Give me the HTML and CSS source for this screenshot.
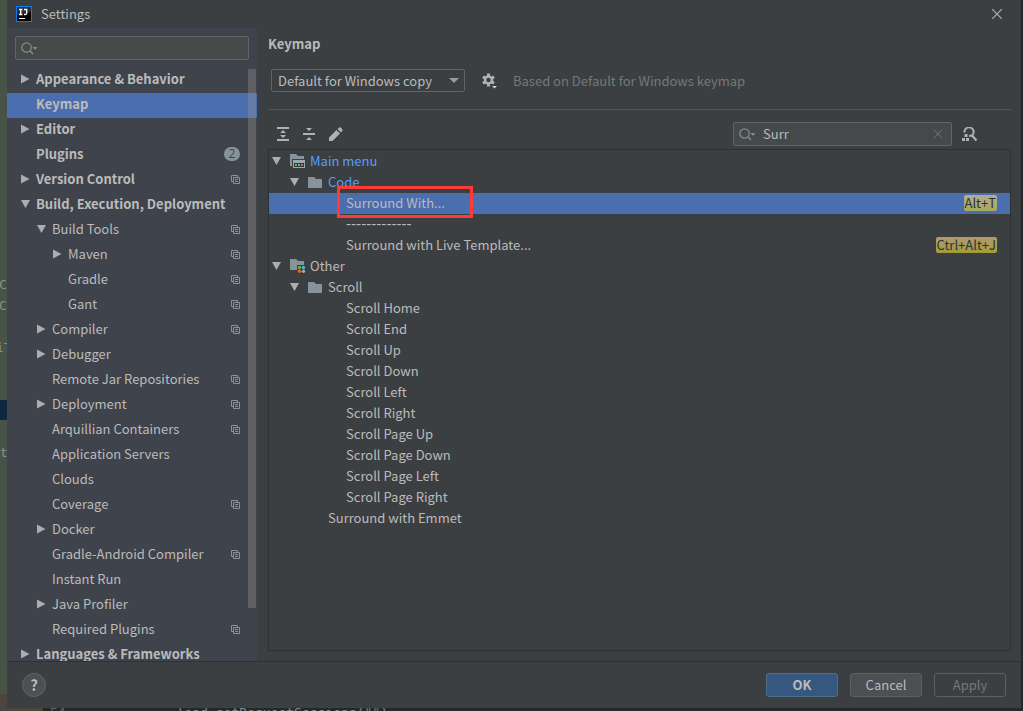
FILE: index.html
```html
<!DOCTYPE html>
<html lang="en">
<head>
<meta charset="utf-8">
<title>Settings</title>
<link rel="stylesheet" href="styles.css">
</head>
<body>
<svg class="defs" width="0" height="0" aria-hidden="true">
  <symbol id="right" viewBox="0 0 9 10"><path d="M0 0.5L8.500 5L0 9.500Z" fill="#adadad"/></symbol>
  <symbol id="down" viewBox="0 0 9 10"><path d="M0 1H9L4.500 9Z" fill="#adadad"/></symbol>
  <symbol id="copy" viewBox="0 0 9 9"><path d="M2 6.500H.5V.5H6.500V2M2.500 2.500H8.500V8.500H2.500ZM4 4.500H7M4 6.500H7" fill="none" stroke="#87939a"/></symbol>
  <symbol id="lens" viewBox="0 0 17 13"><circle cx="5.500" cy="5.500" r="4.700" fill="none" stroke="#7f8b91" stroke-width="1.300"/><path d="M8.800 8.800L12 12" stroke="#7f8b91" stroke-width="1.600"/><path d="M11.500 5H16.500L14 8Z" fill="#7f8b91"/></symbol>
  <symbol id="folder" viewBox="0 0 16 14"><path d="M0 2H6L8 4H14V13H0Z" fill="#87939a"/></symbol>
  <symbol id="menufolder" viewBox="0 0 16 14"><path d="M0 0H6L8 2H14V5H2V12H0Z" fill="#87939a"/><path d="M3 6H15V14H3Z" fill="#9aa7b0"/><path d="M4 9H14V13H4Z" fill="#34383b"/><path d="M5 10h2v2H5z" fill="#62b543"/><path d="M8 10h2v2H8z" fill="#40b6e0"/><path d="M11 10h2v2H11z" fill="#f26522"/></symbol>
  <symbol id="otherfolder" viewBox="0 0 16 14"><path d="M0 0H6L8 2H14V6H7V11H0Z" fill="#87939a"/><circle cx="9.500" cy="8.500" r="1.700" fill="#62b543"/><circle cx="13.500" cy="8.500" r="1.700" fill="#40b6e0"/><circle cx="9.500" cy="12.300" r="1.700" fill="#f26522"/><circle cx="13.500" cy="12.300" r="1.700" fill="#9aa7b0"/></symbol>
</svg>
<div class="editor" aria-hidden="true">
  <div class="band"></div><div class="corner"></div>
  <span class="code c1">C</span><span class="code c2">C</span><span class="code c3">iT</span><span class="code c4">st</span>
  <div class="line"><span class="num">54</span><span class="src">load.getRequestSessions(<b>""</b>)</span></div>
</div>
<div class="dialog">
  <header class="titlebar">
    <svg width="16" height="16" viewBox="0 0 16 16"><path d="M0 0H16V16H0Z" fill="#087cfa"/><path d="M1 1H15V15H1Z" fill="#000"/><path d="M1 1H15V6L1 9Z" fill="#2c2d2f"/><path d="M3 3.500H6.500M4.750 3V9M3 8.500H6.500M8 3.500H10.700V7.300Q10.700 8.600 8.500 8.500H8" fill="none" stroke="#fff" stroke-width="1.300"/><path d="M3 12H9V13H3Z" fill="#fff"/></svg>
    <span class="caption">Settings</span>
    <button class="close" aria-label="Close"><svg width="10" height="10" viewBox="0 0 10 10"><path d="M0 0L10 10M10 0L0 10" stroke="#adadad" stroke-width="1.200"/></svg></button>
  </header>
  <div class="body">
    <nav class="side">
      <label class="field"><svg width="17" height="13"><use href="#lens"/></svg><input type="text" aria-label="Search settings"></label>
      <div class="list">
        <div class="row top"><svg class="arrow"><use href="#right"/></svg><span>Appearance &amp; Behavior</span></div>
        <div class="row top selected"><i class="arrow"></i><span>Keymap</span></div>
        <div class="row top"><svg class="arrow"><use href="#right"/></svg><span>Editor</span></div>
        <div class="row top"><i class="arrow"></i><span>Plugins</span><em class="badge">2</em></div>
        <div class="row top"><svg class="arrow"><use href="#right"/></svg><span>Version Control</span><svg class="copy"><use href="#copy"/></svg></div>
        <div class="row top"><svg class="arrow"><use href="#down"/></svg><span>Build, Execution, Deployment</span></div>
        <div class="row sub"><svg class="arrow"><use href="#down"/></svg><span>Build Tools</span><svg class="copy"><use href="#copy"/></svg></div>
        <div class="row deep"><svg class="arrow"><use href="#right"/></svg><span>Maven</span><svg class="copy"><use href="#copy"/></svg></div>
        <div class="row deep"><i class="arrow"></i><span>Gradle</span><svg class="copy"><use href="#copy"/></svg></div>
        <div class="row deep"><i class="arrow"></i><span>Gant</span><svg class="copy"><use href="#copy"/></svg></div>
        <div class="row sub"><svg class="arrow"><use href="#right"/></svg><span>Compiler</span><svg class="copy"><use href="#copy"/></svg></div>
        <div class="row sub"><svg class="arrow"><use href="#right"/></svg><span>Debugger</span></div>
        <div class="row sub"><i class="arrow"></i><span>Remote Jar Repositories</span><svg class="copy"><use href="#copy"/></svg></div>
        <div class="row sub"><svg class="arrow"><use href="#right"/></svg><span>Deployment</span><svg class="copy"><use href="#copy"/></svg></div>
        <div class="row sub"><i class="arrow"></i><span>Arquillian Containers</span><svg class="copy"><use href="#copy"/></svg></div>
        <div class="row sub"><i class="arrow"></i><span>Application Servers</span></div>
        <div class="row sub"><i class="arrow"></i><span>Clouds</span></div>
        <div class="row sub"><i class="arrow"></i><span>Coverage</span><svg class="copy"><use href="#copy"/></svg></div>
        <div class="row sub"><svg class="arrow"><use href="#right"/></svg><span>Docker</span></div>
        <div class="row sub"><i class="arrow"></i><span>Gradle-Android Compiler</span><svg class="copy"><use href="#copy"/></svg></div>
        <div class="row sub"><i class="arrow"></i><span>Instant Run</span></div>
        <div class="row sub"><svg class="arrow"><use href="#right"/></svg><span>Java Profiler</span></div>
        <div class="row sub"><i class="arrow"></i><span>Required Plugins</span><svg class="copy"><use href="#copy"/></svg></div>
        <div class="row top"><svg class="arrow"><use href="#right"/></svg><span>Languages &amp; Frameworks</span></div>
        <div class="thumb"></div>
      </div>
    </nav>
    <main class="main">
      <h1>Keymap</h1>
      <div class="scheme">
        <div class="combo">
          <select aria-label="Keymap scheme"><option>Default for Windows copy</option></select>
          <svg width="10" height="5" viewBox="0 0 10 5"><path d="M0 0H10L5 5Z" fill="#9a9da0"/></svg>
        </div>
        <button class="gear" aria-label="Scheme actions"><svg width="16" height="16" viewBox="0 0 16 16"><g stroke="#afb1b3" stroke-width="3"><path d="M6.500 .5V13.500M.9 3.700L12.100 10.300M.9 10.300L12.100 3.700"/></g><circle cx="6.500" cy="7" r="4.700" fill="#afb1b3"/><circle cx="6.500" cy="7" r="2.200" fill="#3c3f41"/><path d="M9 12H16L12.500 16Z" fill="#3c3f41"/><path d="M10 13H15L12.500 15.500Z" fill="#d0d2d3"/></svg></button>
        <span class="hint">Based on Default for Windows keymap</span>
      </div>
      <div class="tools">
        <button aria-label="Expand all"><svg width="12" height="14" viewBox="0 0 12 14"><path d="M0 0H12V2H0ZM0 12H12V14H0ZM6 3L9 6H3ZM6 11L9 8H3Z" fill="#afb1b3"/></svg></button>
        <button aria-label="Collapse all"><svg width="12" height="14" viewBox="0 0 12 14"><path d="M0 6H12V8H0ZM3 1H9L6 4ZM3 13H9L6 10Z" fill="#afb1b3"/></svg></button>
        <button aria-label="Edit shortcut"><svg width="14" height="14" viewBox="0 0 14 14"><path d="M0 14V10.500L7.500 3L11 6.500L3.500 14ZM8.500 2L10.200 .5Q11 0 11.700 .6L13.300 2.300Q14 3 13.400 3.800L12 5.500Z" fill="#afb1b3"/></svg></button>
        <label class="field find"><svg width="17" height="13"><use href="#lens"/></svg><input type="text" value="Surr" aria-label="Search actions"><svg width="8" height="8" viewBox="0 0 8 8"><path d="M0 0L8 8M8 0L0 8" stroke="#6e7376"/></svg></label>
        <button class="byshortcut" aria-label="Find actions by shortcut"><svg width="16" height="14" viewBox="0 0 16 14"><path d="M2.500 5.500A4.600 4.600 0 1 1 10 8.500L7 9" fill="none" stroke="#afb1b3" stroke-width="2"/><path d="M10 8.500L14.500 13.500" stroke="#afb1b3" stroke-width="2.200"/><path d="M2.500 7H5.500V10H2.500ZM0 11H3V14H0ZM4 11H7V14H4Z" fill="#afb1b3"/></svg></button>
      </div>
      <div class="tree">
        <div class="node l0 link"><svg class="arrow"><use href="#down"/></svg><svg class="ico"><use href="#menufolder"/></svg><span>Main menu</span></div>
        <div class="node l1 link"><svg class="arrow"><use href="#down"/></svg><svg class="ico"><use href="#folder"/></svg><span>Code</span></div>
        <div class="node l2 selected"><span>Surround With...</span><kbd class="hot">Alt+T</kbd><div class="mark"></div></div>
        <div class="node l2"><span class="dashes">-------------</span></div>
        <div class="node l2"><span>Surround with Live Template...</span><kbd>Ctrl+Alt+J</kbd></div>
        <div class="node l0"><svg class="arrow"><use href="#down"/></svg><svg class="ico"><use href="#otherfolder"/></svg><span>Other</span></div>
        <div class="node l1"><svg class="arrow"><use href="#down"/></svg><svg class="ico"><use href="#folder"/></svg><span>Scroll</span></div>
        <div class="node l2"><span>Scroll Home</span></div>
        <div class="node l2"><span>Scroll End</span></div>
        <div class="node l2"><span>Scroll Up</span></div>
        <div class="node l2"><span>Scroll Down</span></div>
        <div class="node l2"><span>Scroll Left</span></div>
        <div class="node l2"><span>Scroll Right</span></div>
        <div class="node l2"><span>Scroll Page Up</span></div>
        <div class="node l2"><span>Scroll Page Down</span></div>
        <div class="node l2"><span>Scroll Page Left</span></div>
        <div class="node l2"><span>Scroll Page Right</span></div>
        <div class="node leaf"><span>Surround with Emmet</span></div>
      </div>
    </main>
  </div>
  <footer class="footer">
    <button class="help" aria-label="Help">?</button>
    <button class="btn ok">OK</button>
    <button class="btn">Cancel</button>
    <button class="btn off" disabled>Apply</button>
  </footer>
</div>
</body>
</html>
```
FILE: styles.css
```css
* { box-sizing: border-box; }
body {
  margin: 0;
  height: 100vh;
  padding: 0 2px 3px 7px;
  color: #bbbbbb;
  font: 13px/20px "Noto Sans CJK SC", "Noto Sans", sans-serif;
  overflow: hidden;
}
button, input, select { font: inherit; color: inherit; }
button { padding: 0; border: 0; background: none; }
svg { display: block; flex: none; }
.defs { position: absolute; }

/* Editor window behind the dialog */
.editor { position: absolute; inset: 0; z-index: -1; overflow: hidden; background: linear-gradient(to right, #465346 7px, #262728 7px); }
.band { position: absolute; left: 0; top: 400px; width: 7px; height: 20px; background: #0d293e; }
.corner { position: absolute; left: 0; bottom: 0; width: 43px; height: 17px; background: #4c453d; }
.code { position: absolute; left: -1px; color: #8a9088; font: 13px/20px "DejaVu Sans Mono", monospace; }
.c1 { top: 275px; }
.c2 { top: 296px; }
.c3 { top: 338px; left: -4px; }
.c4 { top: 443px; left: -8px; }
.line { position: absolute; left: 50px; top: 705px; display: flex; gap: 111px; font: 13px/16px "DejaVu Sans Mono", monospace; color: #7f8a94; }
.num { color: #606366; }
.line b { color: #6a8759; font-weight: normal; }

.dialog { height: 100%; display: flex; flex-direction: column; background: #3c3f41; }
.titlebar { height: 28px; padding: 0 19px 0 9px; display: flex; align-items: center; gap: 9px; flex: none; }
.close { margin-left: auto; }
.body { flex: 1; min-height: 0; display: flex; border-bottom: 1px solid #2f3233; }

.side { width: 250px; flex: none; display: flex; flex-direction: column; padding-top: 8px; background: #3f434c; }
.field { height: 24px; display: flex; align-items: center; padding: 0 5px; border: 1px solid #646464; border-radius: 2px; background: #45494a; }
.field input { flex: 1; min-width: 0; padding: 0 7px; border: 0; outline: 0; background: none; }
.side .field { margin: 0 8px 8px; }
.list { position: relative; flex: 1; min-height: 0; overflow: hidden; }
.row { height: 25px; display: flex; align-items: center; gap: 6px; padding: 0 17px 3px 14px; white-space: nowrap; }
.arrow { width: 9px; height: 10px; flex: none; }
.top { font-weight: bold; }
.sub { padding-left: 30px; }
.deep { padding-left: 46px; }
.selected { background: #4b6eaf; }
.copy { width: 9px; height: 9px; margin-left: auto; }
.badge { margin-left: auto; width: 16px; height: 14px; border-radius: 7px; background: #87939a; color: #3f434c; font: 12px/14px "Open Sans", sans-serif; text-align: center; }
.thumb { position: absolute; right: 1px; top: 1px; width: 8px; height: 539px; background: rgba(150, 150, 150, 0.35); }

.main { flex: 1; min-width: 0; display: flex; flex-direction: column; padding: 6px 10px 10px 11px; }
h1 { margin: 0; font-size: 13px; line-height: 20px; }
.scheme { display: flex; align-items: center; padding: 15px 0 17px 3px; border-bottom: 1px solid #515658; }
.combo { display: grid; align-items: center; width: 194px; }
.combo > * { grid-area: 1 / 1; }
.combo svg { justify-self: end; margin-right: 6px; pointer-events: none; }
select { appearance: none; height: 23px; padding: 0 6px; border: 1px solid #646464; border-radius: 2px; background: #3c3f41; }
.gear { margin: 0 15px 0 17px; }
.hint { color: #777777; }
.tools { display: flex; align-items: center; padding: 12px 33px 3px 9px; gap: 14px; }
.find { width: 219px; margin-left: auto; padding-right: 9px; }
.byshortcut { margin-left: -4px; }
.tree { flex: 1; min-height: 0; padding-top: 1px; border: 1px solid #2f3233; overflow: hidden; }
.node { position: relative; height: 21px; display: flex; align-items: center; padding: 0 13px 1px 0; white-space: nowrap; }
.node .arrow { margin-right: 9px; }
.ico { width: 16px; height: 14px; margin-right: 4px; }
.node.l0 { padding-left: 3px; }
.node.l1 { padding-left: 21px; }
.node.l2 { padding-left: 77px; }
.node.leaf { padding-left: 59px; }
.link { color: #589df6; }
.dashes { font: 14px/20px "DejaVu Sans", sans-serif; }
kbd { margin-left: auto; height: 16px; padding: 0 1px; border-radius: 2px; background: linear-gradient(#b29a74, #a19c37); color: #2f3233; font: 13px/16px "Noto Sans CJK SC", sans-serif; }
.hot { background: linear-gradient(#b3aa9b, #a5ab55); }
.mark { position: absolute; left: 68px; top: -7px; width: 136px; height: 32px; border: 3px solid #ff3b38; }

.footer { height: 46px; flex: none; display: flex; align-items: center; gap: 12px; padding: 0 15px; }
.help { width: 24px; height: 24px; margin-right: auto; border: 1px solid #626566; border-radius: 50%; background: #4c5052; font-size: 15px; font-weight: bold; }
.btn { width: 72px; height: 24px; border: 1px solid #5e6060; border-radius: 3px; background: #4c5052; }
.ok { background: #365880; border-color: #4c708c; font-weight: bold; }
.off { background: none; color: #777777; }
```
